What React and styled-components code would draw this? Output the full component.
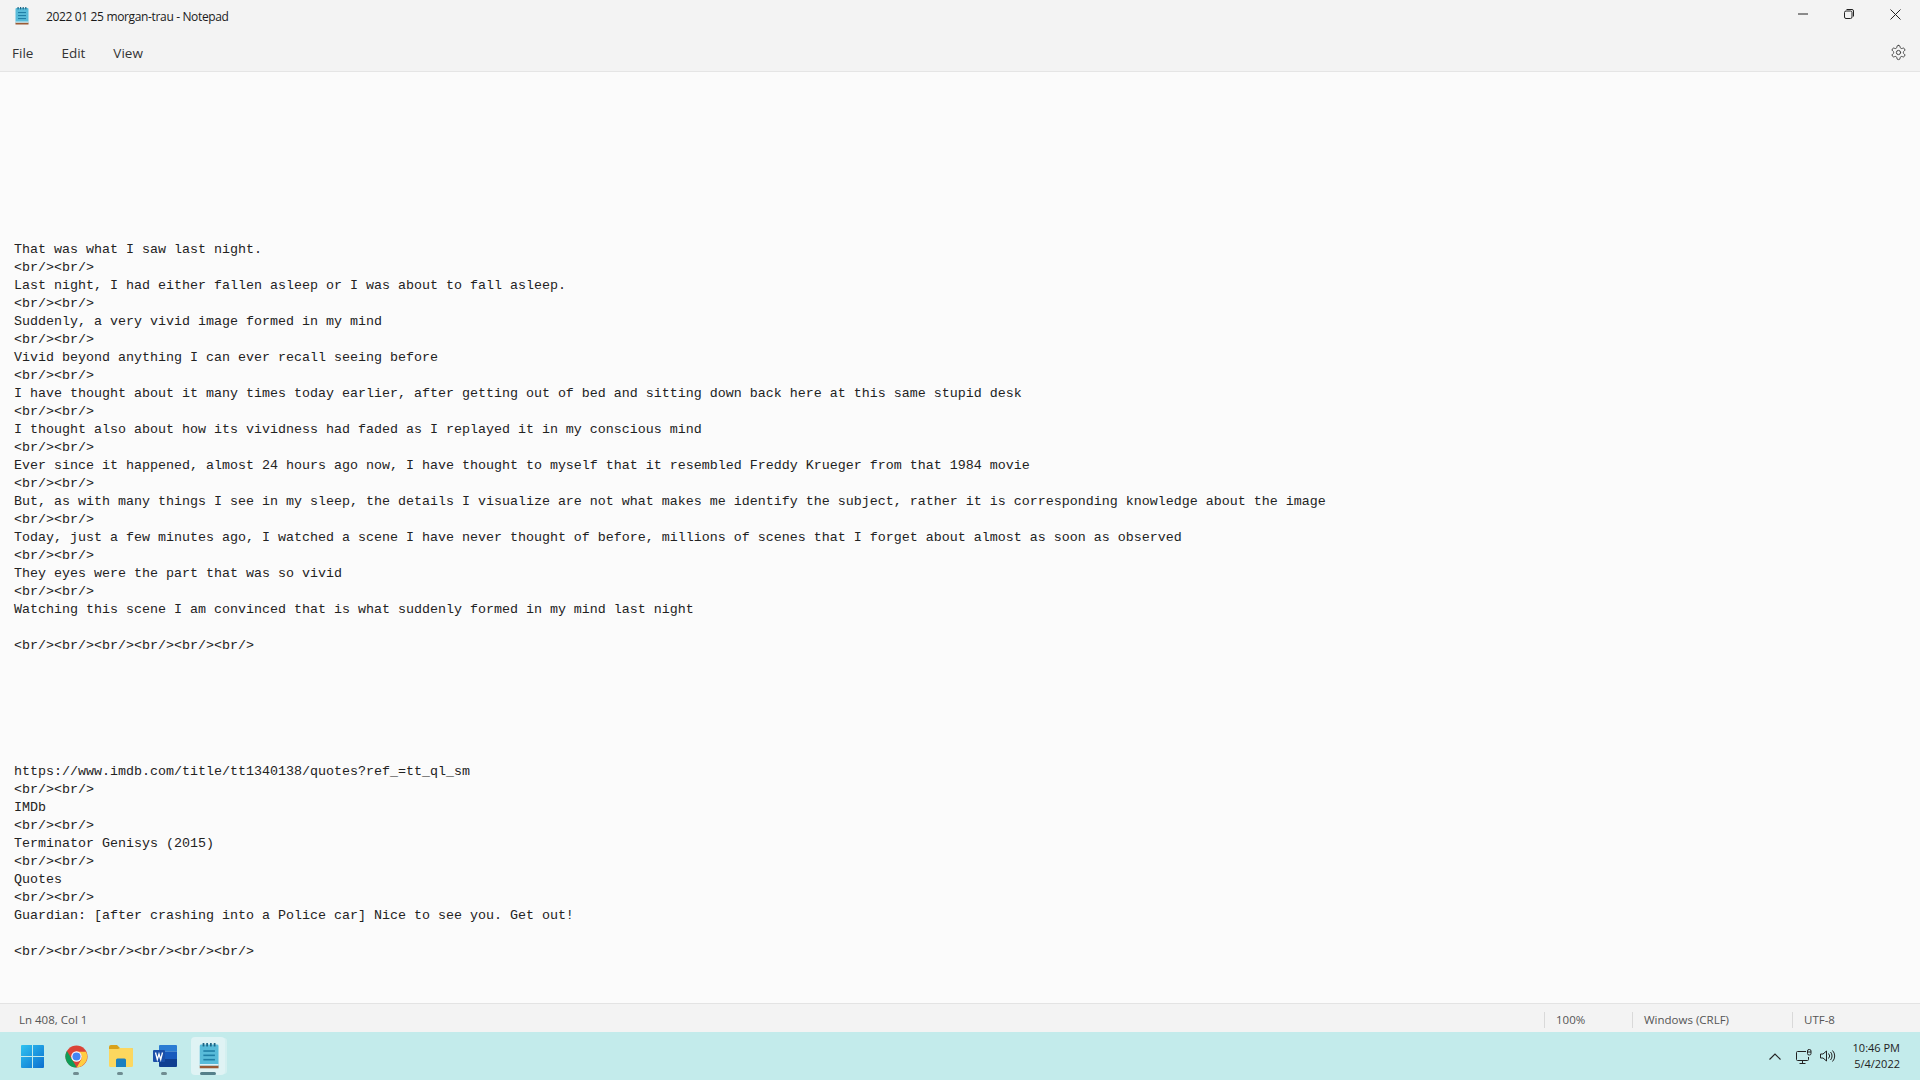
import React from 'react'
import styled, { createGlobalStyle } from 'styled-components'

const GlobalStyle = createGlobalStyle`
  html, body { margin: 0; padding: 0; height: 100%; overflow: hidden; }
  body { font-family: "Open Sans", "Noto Sans", sans-serif; color: #1b1b1b; }
  #root { height: 100%; }
`

const Page = styled.div`
  width: 1920px;
  height: 1080px;
  display: flex;
  flex-direction: column;
  background: #f3f3f3;
`
const TitleBar = styled.div`
  height: 32px;
  display: flex;
  align-items: center;
  flex-shrink: 0;
`
const AppIcon = styled.div`
  width: 14px;
  height: 18px;
  margin-left: 15px;
  display: flex;
`
const Title = styled.div`
  margin-left: 17px;
  font-size: 12px;
  letter-spacing: -0.35px;
  color: #1a1a1a;
`
const WindowControls = styled.div`
  margin-left: auto;
  display: flex;
  height: 100%;
  padding-right: 2px;
`
const ControlButton = styled.div`
  width: 46px;
  height: 28px;
  display: flex;
  align-items: center;
  justify-content: center;
`
const MenuBar = styled.div`
  height: 40px;
  display: flex;
  align-items: center;
  padding: 2px 13px 0 12px;
  box-sizing: border-box;
  border-bottom: 1px solid #e5e5e5;
  flex-shrink: 0;
`
const MenuItem = styled.div`
  font-size: 13.5px;
  color: #333;
  margin-right: 28px;
`
const SettingsButton = styled.div`
  margin-left: auto;
  display: flex;
`
const Editor = styled.div`
  flex: 1;
  background: #fbfbfb;
  padding: 169px 14px 0;
  overflow: hidden;
`
const Line = styled.div`
  height: 18px;
  line-height: 18px;
  font-family: "Liberation Mono", monospace;
  font-size: 13.33px;
  color: #222;
  white-space: pre;
`
const StatusBar = styled.div`
  height: 29px;
  display: flex;
  align-items: center;
  padding-top: 3px;
  box-sizing: border-box;
  border-top: 1px solid #e3e3e3;
  flex-shrink: 0;
  font-size: 11.5px;
  color: #555;
`
const StatusLeft = styled.div`
  flex: 1;
  padding-left: 19px;
`
const StatusCell = styled.div`
  width: ${(props) => props.width}px;
  box-sizing: border-box;
  padding-left: 11px;
  height: 16px;
  line-height: 16px;
  border-left: 1px solid #d9d9d9;
`
const Taskbar = styled.div`
  height: 48px;
  background: #c3ebeb;
  display: flex;
  align-items: center;
  padding-left: 10px;
  flex-shrink: 0;
`
const TaskButton = styled.div`
  position: relative;
  width: 44px;
  height: 38px;
  display: flex;
  align-items: center;
  justify-content: center;

  &::before {
    content: ${(props) => (props.active ? '""' : 'none')};
    position: absolute;
    top: 0;
    bottom: 0;
    left: 5px;
    right: 5px;
    border-radius: 4px;
    background: #dff3f4;
    box-shadow: 3px 0 0 -1px #d4f0f0;
  }

  & > svg {
    position: relative;
    margin-left: ${(props) => props.shift || 0}px;
  }
`
const Indicator = styled.span`
  position: absolute;
  bottom: 0;
  left: 50%;
  transform: translateX(-50%);
  width: ${(props) => (props.active ? 16 : 6)}px;
  height: 3px;
  border-radius: 2px;
  background: ${(props) => (props.active ? '#55808a' : '#6f8c91')};
`
const Tray = styled.div`
  margin-left: auto;
  display: flex;
  align-items: center;
  padding-right: 20px;
`
const TrayIcon = styled.div`
  display: flex;
  margin-left: ${(props) => props.gap}px;
`
const Clock = styled.div`
  margin-left: 16px;
  text-align: right;
  white-space: nowrap;
  font-size: 11px;
  line-height: 16px;
  color: #222;
`

const lines = [
  'That was what I saw last night.', 'BR',
  'Last night, I had either fallen asleep or I was about to fall asleep.', 'BR',
  'Suddenly, a very vivid image formed in my mind', 'BR',
  'Vivid beyond anything I can ever recall seeing before', 'BR',
  'I have thought about it many times today earlier, after getting out of bed and sitting down back here at this same stupid desk', 'BR',
  'I thought also about how its vividness had faded as I replayed it in my conscious mind', 'BR',
  'Ever since it happened, almost 24 hours ago now, I have thought to myself that it resembled Freddy Krueger from that 1984 movie', 'BR',
  'But, as with many things I see in my sleep, the details I visualize are not what makes me identify the subject, rather it is corresponding knowledge about the image', 'BR',
  'Today, just a few minutes ago, I watched a scene I have never thought of before, millions of scenes that I forget about almost as soon as observed', 'BR',
  'They eyes were the part that was so vivid', 'BR',
  'Watching this scene I am convinced that is what suddenly formed in my mind last night',
  '', 'BR3', '', '', '', '', '', '',
  'https://www.imdb.com/title/tt1340138/quotes?ref_=tt_ql_sm', 'BR',
  'IMDb', 'BR',
  'Terminator Genisys (2015)', 'BR',
  'Quotes', 'BR',
  'Guardian: [after crashing into a Police car] Nice to see you. Get out!',
  '', 'BR3',
]

function lineText(line) {
  if (line === 'BR') return '<br/><br/>'
  if (line === 'BR3') return '<br/><br/><br/><br/><br/><br/>'
  return line
}

function NotepadIcon({ size }) {
  return (
    <svg width={size * 0.78} height={size} viewBox="0 0 14 18">
      <rect x="0.5" y="1" width="13" height="15.5" rx="1" fill="#58bbd9" />
      <rect x="0.5" y="15.6" width="13" height="1.9" fill="#9a5a34" />
      <rect x="0.5" y="14.6" width="13" height="1" fill="#eef7f9" />
      <g fill="#1f7fa6">
        <rect x="3" y="5" width="8" height="1.1" />
        <rect x="3" y="8" width="8" height="1.1" />
        <rect x="3" y="11" width="8" height="1.1" />
      </g>
      <g fill="#1d6585">
        <rect x="2.5" y="0" width="1.2" height="2.4" />
        <rect x="5" y="0" width="1.2" height="2.4" />
        <rect x="7.6" y="0" width="1.2" height="2.4" />
        <rect x="10.2" y="0" width="1.2" height="2.4" />
      </g>
    </svg>
  )
}

function WindowsIcon() {
  return (
    <svg width="23" height="23" viewBox="0 0 23 23">
      <defs>
        <linearGradient id="winBlue" x1="0" y1="0" x2="1" y2="1">
          <stop offset="0" stopColor="#2fc3f0" />
          <stop offset="1" stopColor="#0c6fd0" />
        </linearGradient>
      </defs>
      <path fill="url(#winBlue)" d="M1 0h10v11H0V1a1 1 0 0 1 1-1zM12 0h10a1 1 0 0 1 1 1v10H12zM0 12h11v11H1a1 1 0 0 1-1-1zM12 12h11v10a1 1 0 0 1-1 1H12z" />
    </svg>
  )
}

function ChromeIcon() {
  return (
    <svg width="23" height="23" viewBox="0 0 48 48">
      <circle cx="24" cy="24" r="23" fill="#db4437" />
      <path fill="#0f9d58" d="M4 12.500 15 31l9.500 16A23 23 0 0 1 4 12.500z" />
      <path fill="#ffcd40" d="M24 14h20a23 23 0 0 1-19.500 33L34 30a11 11 0 0 0-10-16z" />
      <circle cx="24" cy="24" r="11" fill="#fff" />
      <circle cx="24" cy="24" r="8.500" fill="#4285f4" />
    </svg>
  )
}

function FolderIcon() {
  return (
    <svg width="24" height="22" viewBox="0 0 24 22">
      <path fill="#d9a21b" d="M0 2a2 2 0 0 1 2-2h6l3 3h11a2 2 0 0 1 2 2v4H0z" />
      <path fill="#fcd75f" d="M0 4h9l2-1h11.500A1.500 1.500 0 0 1 24 4.500V20.500a1.500 1.500 0 0 1-1.500 1.500H1.500A1.500 1.500 0 0 1 0 20.500z" />
      <path fill="#1b7fc0" d="M7 15a1.500 1.500 0 0 1 1.500-1.500h7A1.500 1.500 0 0 1 17 15v7H7z" />
    </svg>
  )
}

function WordIcon() {
  return (
    <svg width="24" height="22" viewBox="0 0 24 22">
      <path fill="#2b7cd3" d="M6 1a1 1 0 0 1 1-1h16a1 1 0 0 1 1 1v5.500H6z" />
      <rect x="6" y="6.500" width="18" height="7.500" fill="#185abd" />
      <path fill="#103f91" d="M6 14h18v7a1 1 0 0 1-1 1H7a1 1 0 0 1-1-1z" />
      <rect x="0" y="5" width="12" height="12" rx="1" fill="#1b4fa8" />
      <path fill="none" stroke="#fff" strokeWidth="1.300" d="M2.500 7.500 4.300 14.500 6 9 7.700 14.500 9.500 7.500" />
    </svg>
  )
}

function NetworkIcon() {
  return (
    <svg width="16" height="15" viewBox="0 0 16 15" fill="none" stroke="#222" strokeWidth="1">
      <path d="M10 2.500H1.500a1 1 0 0 0-1 1V10.500a1 1 0 0 0 1 1h10a1 1 0 0 0 1-1V8" />
      <path d="M6.500 11.500v2.500M3.500 14.500h6" />
      <rect x="11.500" y="0.500" width="3.500" height="5.500" rx="1.500" />
      <path d="M11.500 3h3.500" />
    </svg>
  )
}

function SpeakerIcon() {
  return (
    <svg width="17" height="14" viewBox="0 0 17 14" fill="none" stroke="#222" strokeWidth="1">
      <path d="M0.500 5v4h2.500l3.500 3V2L3 5z" />
      <path d="M8.500 4.500a3.500 3.500 0 0 1 0 5" />
      <path d="M10.500 3a6 6 0 0 1 0 8" />
      <path d="M12.500 1.500a8 8 0 0 1 0 11" />
    </svg>
  )
}

export default function App() {
  return (
    <Page>
      <GlobalStyle />
      <TitleBar>
        <AppIcon><NotepadIcon size={18} /></AppIcon>
        <Title>2022 01 25 morgan-trau - Notepad</Title>
        <WindowControls>
          <ControlButton>
            <svg width="10" height="2" viewBox="0 0 10 2"><path d="M0 1h10" stroke="#222" /></svg>
          </ControlButton>
          <ControlButton>
            <svg width="10" height="10" viewBox="0 0 10 10" fill="none" stroke="#222">
              <rect x="0.500" y="2" width="7.500" height="7.500" rx="1.500" />
              <path d="M2.500 0.500H8A1.500 1.500 0 0 1 9.500 2v5.500" />
            </svg>
          </ControlButton>
          <ControlButton>
            <svg width="11" height="11" viewBox="0 0 11 11"><path d="M0.500 0.500l10 10M10.500 0.500l-10 10" stroke="#222" /></svg>
          </ControlButton>
        </WindowControls>
      </TitleBar>
      <MenuBar>
        <MenuItem>File</MenuItem>
        <MenuItem>Edit</MenuItem>
        <MenuItem>View</MenuItem>
        <SettingsButton>
          <svg width="17" height="17" viewBox="0 0 24 24" fill="none" stroke="#444" strokeWidth="1.400" strokeLinecap="round" strokeLinejoin="round">
            <path d="M12.220 2h-.44a2 2 0 0 0-2 2v.18a2 2 0 0 1-1 1.730l-.43.250a2 2 0 0 1-2 0l-.15-.08a2 2 0 0 0-2.730.730l-.22.380a2 2 0 0 0 .730 2.730l.15.100a2 2 0 0 1 1 1.720v.510a2 2 0 0 1-1 1.740l-.15.090a2 2 0 0 0-.730 2.730l.22.380a2 2 0 0 0 2.730.730l.15-.08a2 2 0 0 1 2 0l.43.250a2 2 0 0 1 1 1.730V20a2 2 0 0 0 2 2h.44a2 2 0 0 0 2-2v-.18a2 2 0 0 1 1-1.730l.43-.250a2 2 0 0 1 2 0l.15.080a2 2 0 0 0 2.730-.730l.22-.390a2 2 0 0 0-.730-2.730l-.15-.080a2 2 0 0 1-1-1.740v-.500a2 2 0 0 1 1-1.740l.15-.090a2 2 0 0 0 .730-2.730l-.22-.380a2 2 0 0 0-2.730-.730l-.15.080a2 2 0 0 1-2 0l-.43-.250a2 2 0 0 1-1-1.730V4a2 2 0 0 0-2-2z" />
            <circle cx="12" cy="12" r="3" />
          </svg>
        </SettingsButton>
      </MenuBar>
      <Editor>
        {lines.map((line, i) => (
          <Line key={i}>{lineText(line)}</Line>
        ))}
      </Editor>
      <StatusBar>
        <StatusLeft>Ln 408, Col 1</StatusLeft>
        <StatusCell width={88}>100%</StatusCell>
        <StatusCell width={160}>Windows (CRLF)</StatusCell>
        <StatusCell width={128}>UTF-8</StatusCell>
      </StatusBar>
      <Taskbar>
        <TaskButton><WindowsIcon /></TaskButton>
        <TaskButton><ChromeIcon /><Indicator /></TaskButton>
        <TaskButton shift={2}><FolderIcon /><Indicator /></TaskButton>
        <TaskButton shift={2}><WordIcon /><Indicator /></TaskButton>
        <TaskButton active shift={2}><NotepadIcon size={26} /><Indicator active /></TaskButton>
        <Tray>
          <TrayIcon>
            <svg width="12" height="7" viewBox="0 0 12 7" fill="none" stroke="#222" strokeWidth="1.100"><path d="M0.500 6.500 6 1l5.500 5.500" /></svg>
          </TrayIcon>
          <TrayIcon gap={15}><NetworkIcon /></TrayIcon>
          <TrayIcon gap={8}><SpeakerIcon /></TrayIcon>
          <Clock>10:46 PM<br />5/4/2022</Clock>
        </Tray>
      </Taskbar>
    </Page>
  )
}
